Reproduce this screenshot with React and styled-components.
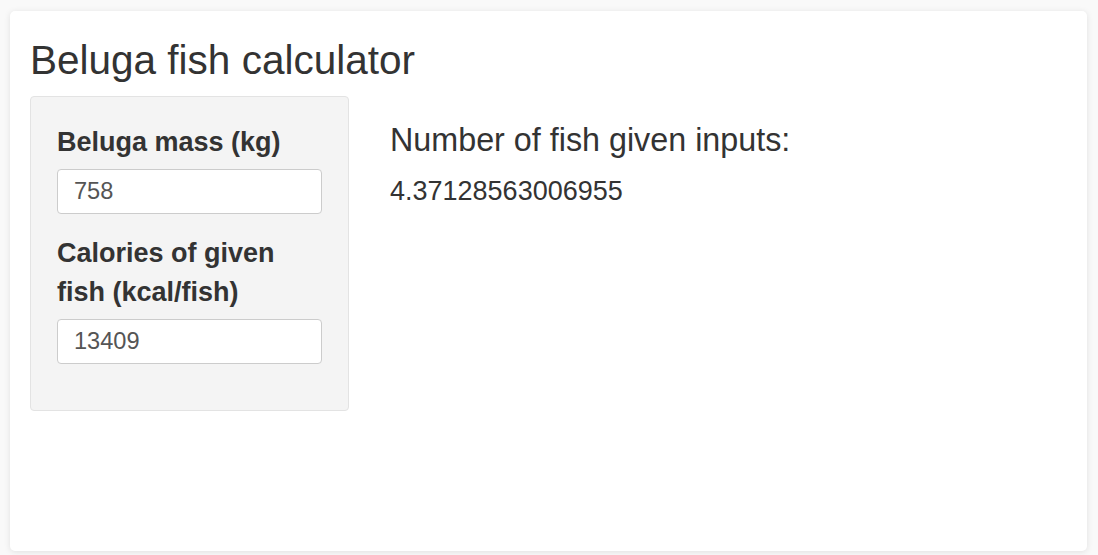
import React from 'react'
import styled, { createGlobalStyle } from 'styled-components'

const GlobalStyle = createGlobalStyle`
  html, body {
    margin: 0;
    padding: 0;
    background: #f9f9f9;
  }
  body {
    font-family: "Liberation Sans", Arial, sans-serif;
    color: #333;
  }
`

const Page = styled.div`
  padding: 11px 11px 4px 10px;
  height: 555px;
  box-sizing: border-box;
`

const Card = styled.div`
  height: 100%;
  box-sizing: border-box;
  background: #fff;
  border-radius: 5px;
  box-shadow: 0 1px 6px rgba(0, 0, 0, 0.1);
  padding: 27px 20px 20px 20px;
`

const Title = styled.h2`
  margin: 0 0 14px 0;
  font-size: 40.5px;
  line-height: 44px;
  font-weight: 400;
  color: #333;
`

const Row = styled.div`
  display: flex;
  align-items: flex-start;
  gap: 41px;
`

const Well = styled.div`
  width: 319px;
  box-sizing: border-box;
  padding: 26px 26px 26px 26px;
  background: #f4f4f4;
  border: 1px solid #e3e3e3;
  border-radius: 4px;
`

const Field = styled.div`
  margin-bottom: 20px;
`

const Label = styled.label`
  display: block;
  font-size: 27px;
  line-height: 39.5px;
  font-weight: 700;
  color: #333;
  margin-bottom: 6px;
`

const Input = styled.input`
  display: block;
  width: 100%;
  height: 45px;
  box-sizing: border-box;
  padding: 0 16px;
  font-family: inherit;
  font-size: 23.6px;
  color: #555;
  background: #fff;
  border: 1px solid #ccc;
  border-radius: 4px;
  outline: none;
`

const Main = styled.div`
  flex: 1;
  padding-top: 27px;
`

const Heading = styled.h3`
  margin: 0 0 14px 0;
  font-size: 32.3px;
  line-height: 35px;
  font-weight: 400;
  color: #333;
`

const Output = styled.div`
  font-size: 27px;
  line-height: 38.6px;
  color: #333;
`

export default function App() {
  return (
    <>
      <GlobalStyle />
      <Page>
        <Card>
          <Title>Beluga fish calculator</Title>
          <Row>
            <Well>
              <Field>
                <Label>Beluga mass (kg)</Label>
                <Input type="number" defaultValue="758" />
              </Field>
              <Field>
                <Label>Calories of given fish (kcal/fish)</Label>
                <Input type="number" defaultValue="13409" />
              </Field>
            </Well>
            <Main>
              <Heading>Number of fish given inputs:</Heading>
              <Output>4.37128563006955</Output>
            </Main>
          </Row>
        </Card>
      </Page>
    </>
  )
}
